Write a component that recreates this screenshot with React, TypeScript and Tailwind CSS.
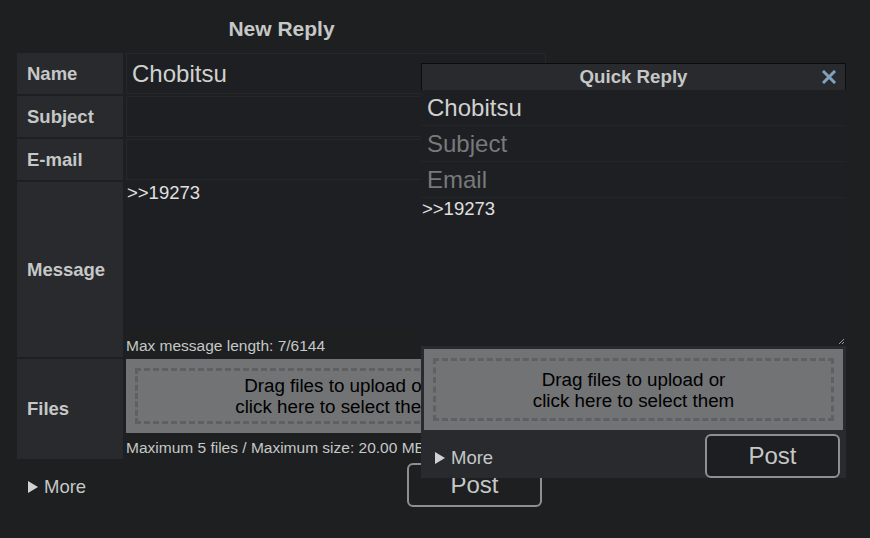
import React from 'react';

const Label = ({ children, className = '' }: { children: React.ReactNode; className?: string }) => (
  <div className={`bg-[#282a2e] flex items-center pl-[10px] font-bold text-[18.5px] text-[#c5c8c6] ${className}`}>{children}</div>
);

const DropZone = ({ className = '' }: { className?: string }) => (
  <div className={`bg-[#727375] p-[9px] ${className}`}>
    <div className="h-full border-[3px] border-dashed border-[#5f6062] flex items-center justify-center text-center text-[18.8px] leading-[21px] text-black">
      Drag files to upload or<br />click here to select them
    </div>
  </div>
);

const More = ({ className = '' }: { className?: string }) => (
  <div className={`flex items-center gap-[6px] text-[18.5px] text-[#c5c8c6] ${className}`}>
    <svg width="10" height="12" viewBox="0 0 10 12">
      <path d="M0 0 L10 6 L0 12 Z" fill="#d0d2d0" />
    </svg>
    More
  </div>
);

const QuickReply = () => (
  <div className="absolute left-[421px] top-[63px] w-[425px] bg-[#282a2e]">
    <div className="relative h-[27px] border border-b-0 border-[#0c0c0c] flex items-center justify-center font-bold text-[18.7px] text-[#c5c8c6]">
      Quick Reply
      <svg className="absolute right-[9px] top-[6px]" width="14" height="14" viewBox="0 0 14 14">
        <path d="M2 2 L12 12 M12 2 L2 12" stroke="#81a2be" strokeWidth="3" strokeLinecap="square" />
      </svg>
    </div>
    <div className="h-[36px] bg-[#1e1f22] border-b border-[#232528] pl-[6px] flex items-center text-[24px] text-[#d0d2d0]">Chobitsu</div>
    <div className="h-[36px] bg-[#1e1f22] border-b border-[#232528] pl-[6px] flex items-center text-[24px] text-[#77797a]">Subject</div>
    <div className="h-[36px] bg-[#1e1f22] border-b border-[#232528] pl-[6px] flex items-center text-[24px] text-[#77797a]">Email</div>
    <div className="relative h-[148px] bg-[#1e1f22] pl-[1px] text-[18.5px] leading-[22px] text-[#e0e0e0]">
      &gt;&gt;19273
      <svg className="absolute right-[1px] bottom-[1px]" width="7" height="7" viewBox="0 0 7 7">
        <path d="M1 6 L6 1 M4 6 L6 4" stroke="#9a9a9a" strokeWidth="1" />
      </svg>
    </div>
    <div className="px-[3px] pt-[3px]">
      <DropZone className="h-[81px]" />
    </div>
    <div className="flex justify-between h-[48px] pl-[14px] pr-[6px]">
      <More className="pt-[8px]" />
      <button className="mt-[4px] w-[135px] h-[44px] rounded-[6px] border-2 border-[#8e8f90] bg-[#1d1e21] text-[24px] text-[#c5c8c6]">Post</button>
    </div>
  </div>
);

export default function App() {
  return (
    <div className="relative w-[870px] h-[538px] bg-[#1d1f21] overflow-hidden text-[#c5c8c6]" style={{ fontFamily: '"Liberation Sans", Arial, sans-serif' }}>
      <div className="w-[529px] ml-[17px]">
        <h2 className="h-[53px] flex items-center justify-center font-bold text-[21px] pt-[4px]">New Reply</h2>
        <div className="grid grid-cols-[106px_420px] gap-x-[3px] gap-y-[2px] grid-rows-[41px_41px_41px_175px_100px]">
          <Label>Name</Label>
          <div className="bg-[#1e1f22] border border-[#25272b] pl-[5px] flex items-center text-[24px] text-[#d0d2d0]">Chobitsu</div>
          <Label>Subject</Label>
          <div className="bg-[#1e1f22] border border-[#25272b]" />
          <Label>E-mail</Label>
          <div className="bg-[#1e1f22] border border-[#25272b]" />
          <Label>Message</Label>
          <div className="flex flex-col">
            <div className="h-[147px] bg-[#1e1f22] pl-[1px] text-[18.5px] leading-[22px] text-[#e0e0e0]">&gt;&gt;19273</div>
            <div className="flex-1 flex items-end text-[15.5px]">Max message length: 7/6144</div>
          </div>
          <Label>Files</Label>
          <div className="flex flex-col">
            <DropZone className="h-[79px]" />
            <div className="pt-[3px] text-[15.5px] whitespace-nowrap">Maximum 5 files / Maximum size: 20.00 MB</div>
          </div>
        </div>
        <div className="flex items-start justify-between mt-[4px] pr-[4px]">
          <More className="pl-[11px] pt-[10px]" />
          <button className="w-[135px] h-[44px] rounded-[6px] border-2 border-[#8e8f90] bg-[#1d1f21] text-[24px] text-[#c5c8c6]">Post</button>
        </div>
      </div>
      <QuickReply />
    </div>
  );
}
